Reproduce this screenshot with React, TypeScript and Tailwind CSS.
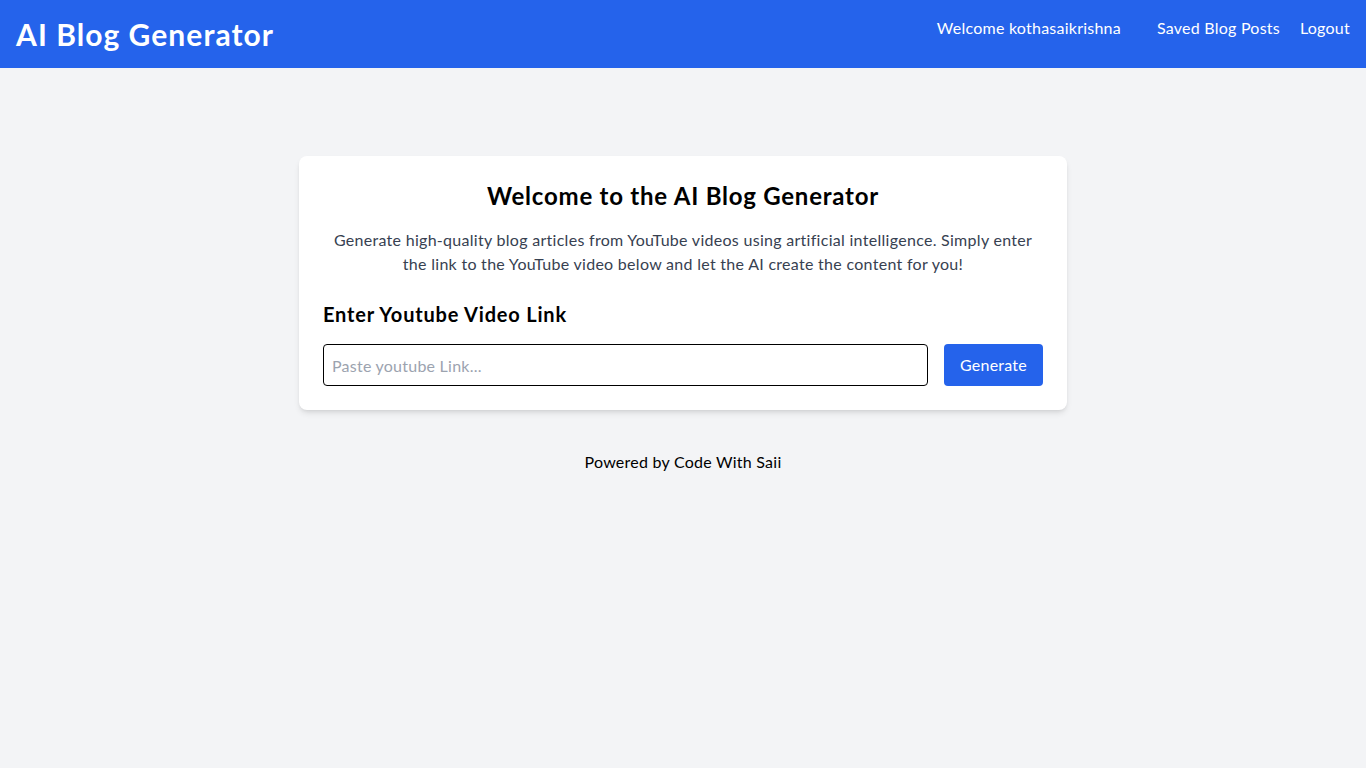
import React, { useState } from 'react';

const App = () => {
    const [link, setLink] = useState('');

    return (
        <div className="min-h-screen flex flex-col bg-[#f3f4f6] font-['Lato',sans-serif] text-black tracking-[0.015em]">
            <nav className="bg-[#2563eb] p-4 text-white flex justify-between">
                <div>
                    <h1 className="text-3xl font-bold leading-9 tracking-[0.035em]">AI Blog Generator</h1>
                </div>
                <div className="flex">
                    <a href="#" className="mr-9">Welcome kothasaikrishna</a>
                    <a href="#" className="mr-5">Saved Blog Posts</a>
                    <a href="#">Logout</a>
                </div>
            </nav>

            <div className="pt-[88px] px-4">
                <div className="max-w-3xl mx-auto bg-white p-6 rounded-lg shadow-md">
                    <div className="text-center">
                        <h2 className="text-2xl font-bold mb-4 tracking-[0.032em]">Welcome to the AI Blog Generator</h2>
                        <p className="text-[#374151] tracking-[0.018em]">
                            Generate high-quality blog articles from YouTube videos using artificial intelligence. Simply enter the link to the YouTube video below and let the AI create the content for you!
                        </p>
                    </div>

                    <div className="mt-6">
                        <h2 className="text-xl font-bold mb-4 tracking-[0.04em]">Enter Youtube Video Link</h2>
                        <div className="flex gap-4">
                            <input
                                type="url"
                                value={link}
                                onChange={e => setLink(e.target.value)}
                                placeholder="Paste youtube Link..."
                                className="flex-grow h-[42px] px-2 border border-black rounded placeholder:text-[#9ca3af] outline-none"
                            />
                            <button className="bg-[#2563eb] text-white px-4 h-[42px] rounded hover:bg-[#1d4ed8] transition-colors">
                                Generate
                            </button>
                        </div>
                    </div>
                </div>
            </div>

            <footer className="text-center mt-10">
                Powered by <a href="#">Code With Saii</a>
            </footer>
        </div>
    );
};

export default App;
